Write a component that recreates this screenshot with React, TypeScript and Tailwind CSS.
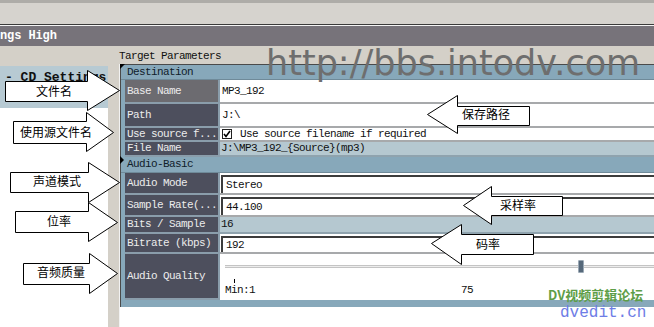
import React from 'react';

const MONO = "font-['Liberation_Mono',monospace]";
const CJK = "font-['Noto_Sans_CJK_SC',sans-serif]";

type Row =
  | { kind: 'header'; label: string; h: string }
  | {
      kind: 'field';
      label: string;
      h: string;
      value?: string;
      variant: 'plain' | 'inset' | 'readonly' | 'check' | 'slider';
      selected?: boolean;
    };

const ROWS: Row[] = [
  { kind: 'header', label: 'Destination', h: 'h-[15px]' },
  { kind: 'field', label: 'Base Name', h: 'h-[24px]', value: 'MP3_192', variant: 'plain', selected: true },
  { kind: 'field', label: 'Path', h: 'h-[24px]', value: 'J:\\', variant: 'plain' },
  { kind: 'field', label: 'Use source f...', h: 'h-[14px]', value: 'Use source filename if required', variant: 'check' },
  { kind: 'field', label: 'File Name', h: 'h-[15px]', value: 'J:\\MP3_192_{Source}(mp3)', variant: 'readonly' },
  { kind: 'header', label: 'Audio-Basic', h: 'h-[16px]' },
  { kind: 'field', label: 'Audio Mode', h: 'h-[22px]', value: 'Stereo', variant: 'inset' },
  { kind: 'field', label: 'Sample Rate(...', h: 'h-[22px]', value: '44.100', variant: 'inset' },
  { kind: 'field', label: 'Bits / Sample', h: 'h-[17px]', value: '16', variant: 'readonly' },
  { kind: 'field', label: 'Bitrate (kbps)', h: 'h-[20px]', value: '192', variant: 'inset' },
  { kind: 'field', label: 'Audio Quality', h: 'h-[46px]', variant: 'slider' },
];

type Callout = {
  dir: 'right' | 'left';
  x1: number;
  x2: number;
  y1: number;
  y2: number;
  hy1: number;
  hy2: number;
  tip: number;
  ty: number;
};

const CALLOUTS: Callout[] = [
  { dir: 'right', x1: 5, x2: 87, y1: 81, y2: 101, hy1: 70, hy2: 110, tip: 119, ty: 90 },
  { dir: 'right', x1: 13, x2: 86, y1: 121, y2: 143, hy1: 112, hy2: 151, tip: 113, ty: 132 },
  { dir: 'right', x1: 10, x2: 88, y1: 172, y2: 192, hy1: 162, hy2: 202, tip: 119, ty: 182 },
  { dir: 'right', x1: 15, x2: 88, y1: 211, y2: 232, hy1: 202, hy2: 241, tip: 117, ty: 222 },
  { dir: 'right', x1: 23, x2: 89, y1: 263, y2: 284, hy1: 253, hy2: 293, tip: 117, ty: 273 },
  { dir: 'left', x1: 529, x2: 457, y1: 106, y2: 125, hy1: 95, hy2: 133, tip: 427, ty: 114 },
  { dir: 'left', x1: 562, x2: 491, y1: 196, y2: 215, hy1: 186, hy2: 224, tip: 463, ty: 205 },
  { dir: 'left', x1: 533, x2: 461, y1: 234, y2: 254, hy1: 224, hy2: 264, tip: 431, ty: 243 },
];

function calloutPoints(c: Callout) {
  const p = (x: number, y: number) => `${x + 0.5},${y + 0.5}`;
  return [
    p(c.x1, c.y1),
    p(c.x2, c.y1),
    p(c.x2, c.hy1),
    p(c.tip, c.ty),
    p(c.x2, c.hy2),
    p(c.x2, c.y2),
    p(c.x1, c.y2),
  ].join(' ');
}

function ValueCell({ row }: { row: Extract<Row, { kind: 'field' }> }) {
  if (row.variant === 'check') {
    return (
      <div className="flex h-full flex-1 items-center gap-[8px] bg-white pl-[2px] border-b-2 border-[#a7a9ab]">
        <span className="flex h-[10px] w-[10px] items-center justify-center border border-[#202020] bg-white">
          <svg width="8" height="8" viewBox="0 0 8 8">
            <path d="M1 4 L3 6.5 L7 1" fill="none" stroke="#000" strokeWidth="1.6" />
          </svg>
        </span>
        <span>{row.value}</span>
      </div>
    );
  }
  if (row.variant === 'readonly') {
    return (
      <div className="flex h-full flex-1 items-center bg-[#b5c8d0] pl-[1px] text-[#101010] border-b-2 border-[#8fa3ae]">
        {row.value}
      </div>
    );
  }
  if (row.variant === 'inset') {
    return (
      <div className="flex h-full flex-1 flex-col bg-white border-b-2 border-[#a7a9ab]">
        <div className="ml-[1px] mt-[2px] flex flex-1 items-center border-l-2 border-t-2 border-[#3c3c3c] pl-[3px]">
          {row.value}
        </div>
      </div>
    );
  }
  if (row.variant === 'slider') {
    return (
      <div className="relative flex h-full flex-1 flex-col bg-white pl-[5px]">
        <div className="mt-[11px] h-[3px] border-t border-b border-[#c4c4c4] bg-[#ececec]" />
        <div className="ml-[9px] mt-[11px] h-[4px] w-[1px] bg-black" />
        <div className="mt-[2px] flex">
          <span className="w-[236px]">Min:1</span>
          <span>75</span>
        </div>
        <div className="absolute left-[358px] top-[6px] h-[13px] w-[6px] rounded-[1px] border border-[#9aa8b4] bg-[#56687a]" />
      </div>
    );
  }
  return (
    <div className="flex h-full flex-1 items-center bg-white pl-[2px] border-b-2 border-[#a7a9ab]">
      {row.value}
    </div>
  );
}

function Grid() {
  return (
    <div className="relative flex flex-col border-l border-t border-[#4a4a4a] bg-[#87a8ba]">
      <svg className="absolute -left-px -top-px" width="5" height="5" viewBox="0 0 5 5">
        <path d="M0 0 H5 L0 5 Z" fill="#000" />
      </svg>
      {ROWS.map((row) =>
        row.kind === 'header' ? (
          <div
            key={row.label}
            className={`${row.h} relative flex items-center border-b border-[#6f8a99] pl-[6px] text-[#10202a]`}
          >
            {row.label === 'Audio-Basic' && (
              <svg className="absolute -left-px top-[-1px]" width="4" height="8" viewBox="0 0 4 8">
                <path d="M0 0 L4 4 L0 8 Z" fill="#000" />
              </svg>
            )}
            {row.label}
          </div>
        ) : (
          <div key={row.label} className={`${row.h} flex pl-[4px] text-[#101010]`}>
            <div
              className={`flex h-full w-[95px] shrink-0 items-center border-b-2 border-r-2 border-[#8a9dab] pl-[2px] text-[#ececec] ${
                row.selected ? 'bg-[#6c6b70]' : 'bg-[#4d4f5d]'
              }`}
            >
              {row.label}
            </div>
            <ValueCell row={row} />
          </div>
        ),
      )}
      <div className="h-[7px] bg-[#87a8ba]" />
    </div>
  );
}

export default function App() {
  return (
    <div
      className={`relative h-[327px] w-[654px] overflow-hidden bg-white ${MONO} text-[11px] leading-none tracking-[-0.6px]`}
    >
      {/* title strip */}
      <div className="h-[24px] border-t-[3px] border-[#aeaca8] bg-[#d6d3ce]" />
      <div className="h-[1px] bg-[#3a3a3a]" />
      <div className="h-[1px] bg-[#f4f4f4]" />
      <div className="flex h-[20px] items-center bg-[#77737a] text-[12px] font-bold tracking-[-0.1px] text-white">
        ngs High
      </div>

      <div className="flex h-[281px]">
        {/* left panel */}
        <div className="flex w-[108px] shrink-0 flex-col">
          <div className="h-[20px] bg-[#d4d0c8]" />
          <div className="h-[42px] bg-[#b7cad3] pl-[5px] pt-[5px] text-[13px] font-bold tracking-[0px] text-[#101010]">
            - CD Settings
          </div>
          <div className="flex-1 bg-white" />
        </div>

        {/* right side */}
        <div className="flex flex-1 flex-col bg-[#d4d0c8]">
          <div className="flex h-[18px] items-center pl-[11px] pt-[2px] text-[#101010]">Target Parameters</div>
          <div className="flex flex-1">
            <div className="w-[12px] shrink-0 border-r border-[#f2f2f2] bg-[#d4d0c8]" />
            <div className="flex flex-1 flex-col bg-white">
              <Grid />
            </div>
          </div>
        </div>
      </div>

      {/* watermark */}
      <div className="absolute left-[266px] top-[46px] font-['DejaVu_Sans',sans-serif] text-[35px] leading-[35px] tracking-normal text-[#6e6e6e]">
        http://bbs.intodv.com
      </div>

      {/* callouts */}
      <svg className="pointer-events-none absolute inset-0" width="654" height="327" viewBox="0 0 654 327">
        {CALLOUTS.map((c, i) => (
          <polygon key={i} points={calloutPoints(c)} fill="#fff" stroke="#000" strokeWidth="1" />
        ))}
      </svg>
      <div className={`${CJK} text-[12px] leading-[14px] tracking-normal text-black`}>
        <span className="absolute left-[36px] top-[84px]">文件名</span>
        <span className="absolute left-[20px] top-[125px]">使用源文件名</span>
        <span className="absolute left-[33px] top-[174px]">声道模式</span>
        <span className="absolute left-[47px] top-[214px]">位率</span>
        <span className="absolute left-[37px] top-[265px]">音频质量</span>
        <span className="absolute left-[462px] top-[107px]">保存路径</span>
        <span className="absolute left-[500px] top-[198px]">采样率</span>
        <span className="absolute left-[476px] top-[237px]">码率</span>
      </div>

      {/* forum stamp */}
      <div className="absolute left-[548px] top-[288px] font-['Noto_Sans_CJK_SC',serif] text-[13px] font-bold leading-[13px] tracking-normal text-[#5e9e48]">
        DV视频剪辑论坛
      </div>
      <div className="absolute left-[560px] top-[304px] font-['Liberation_Mono',monospace] text-[16px] leading-[18px] tracking-normal text-[#6e7de6]">
        dvedit.cn
      </div>
    </div>
  );
}
